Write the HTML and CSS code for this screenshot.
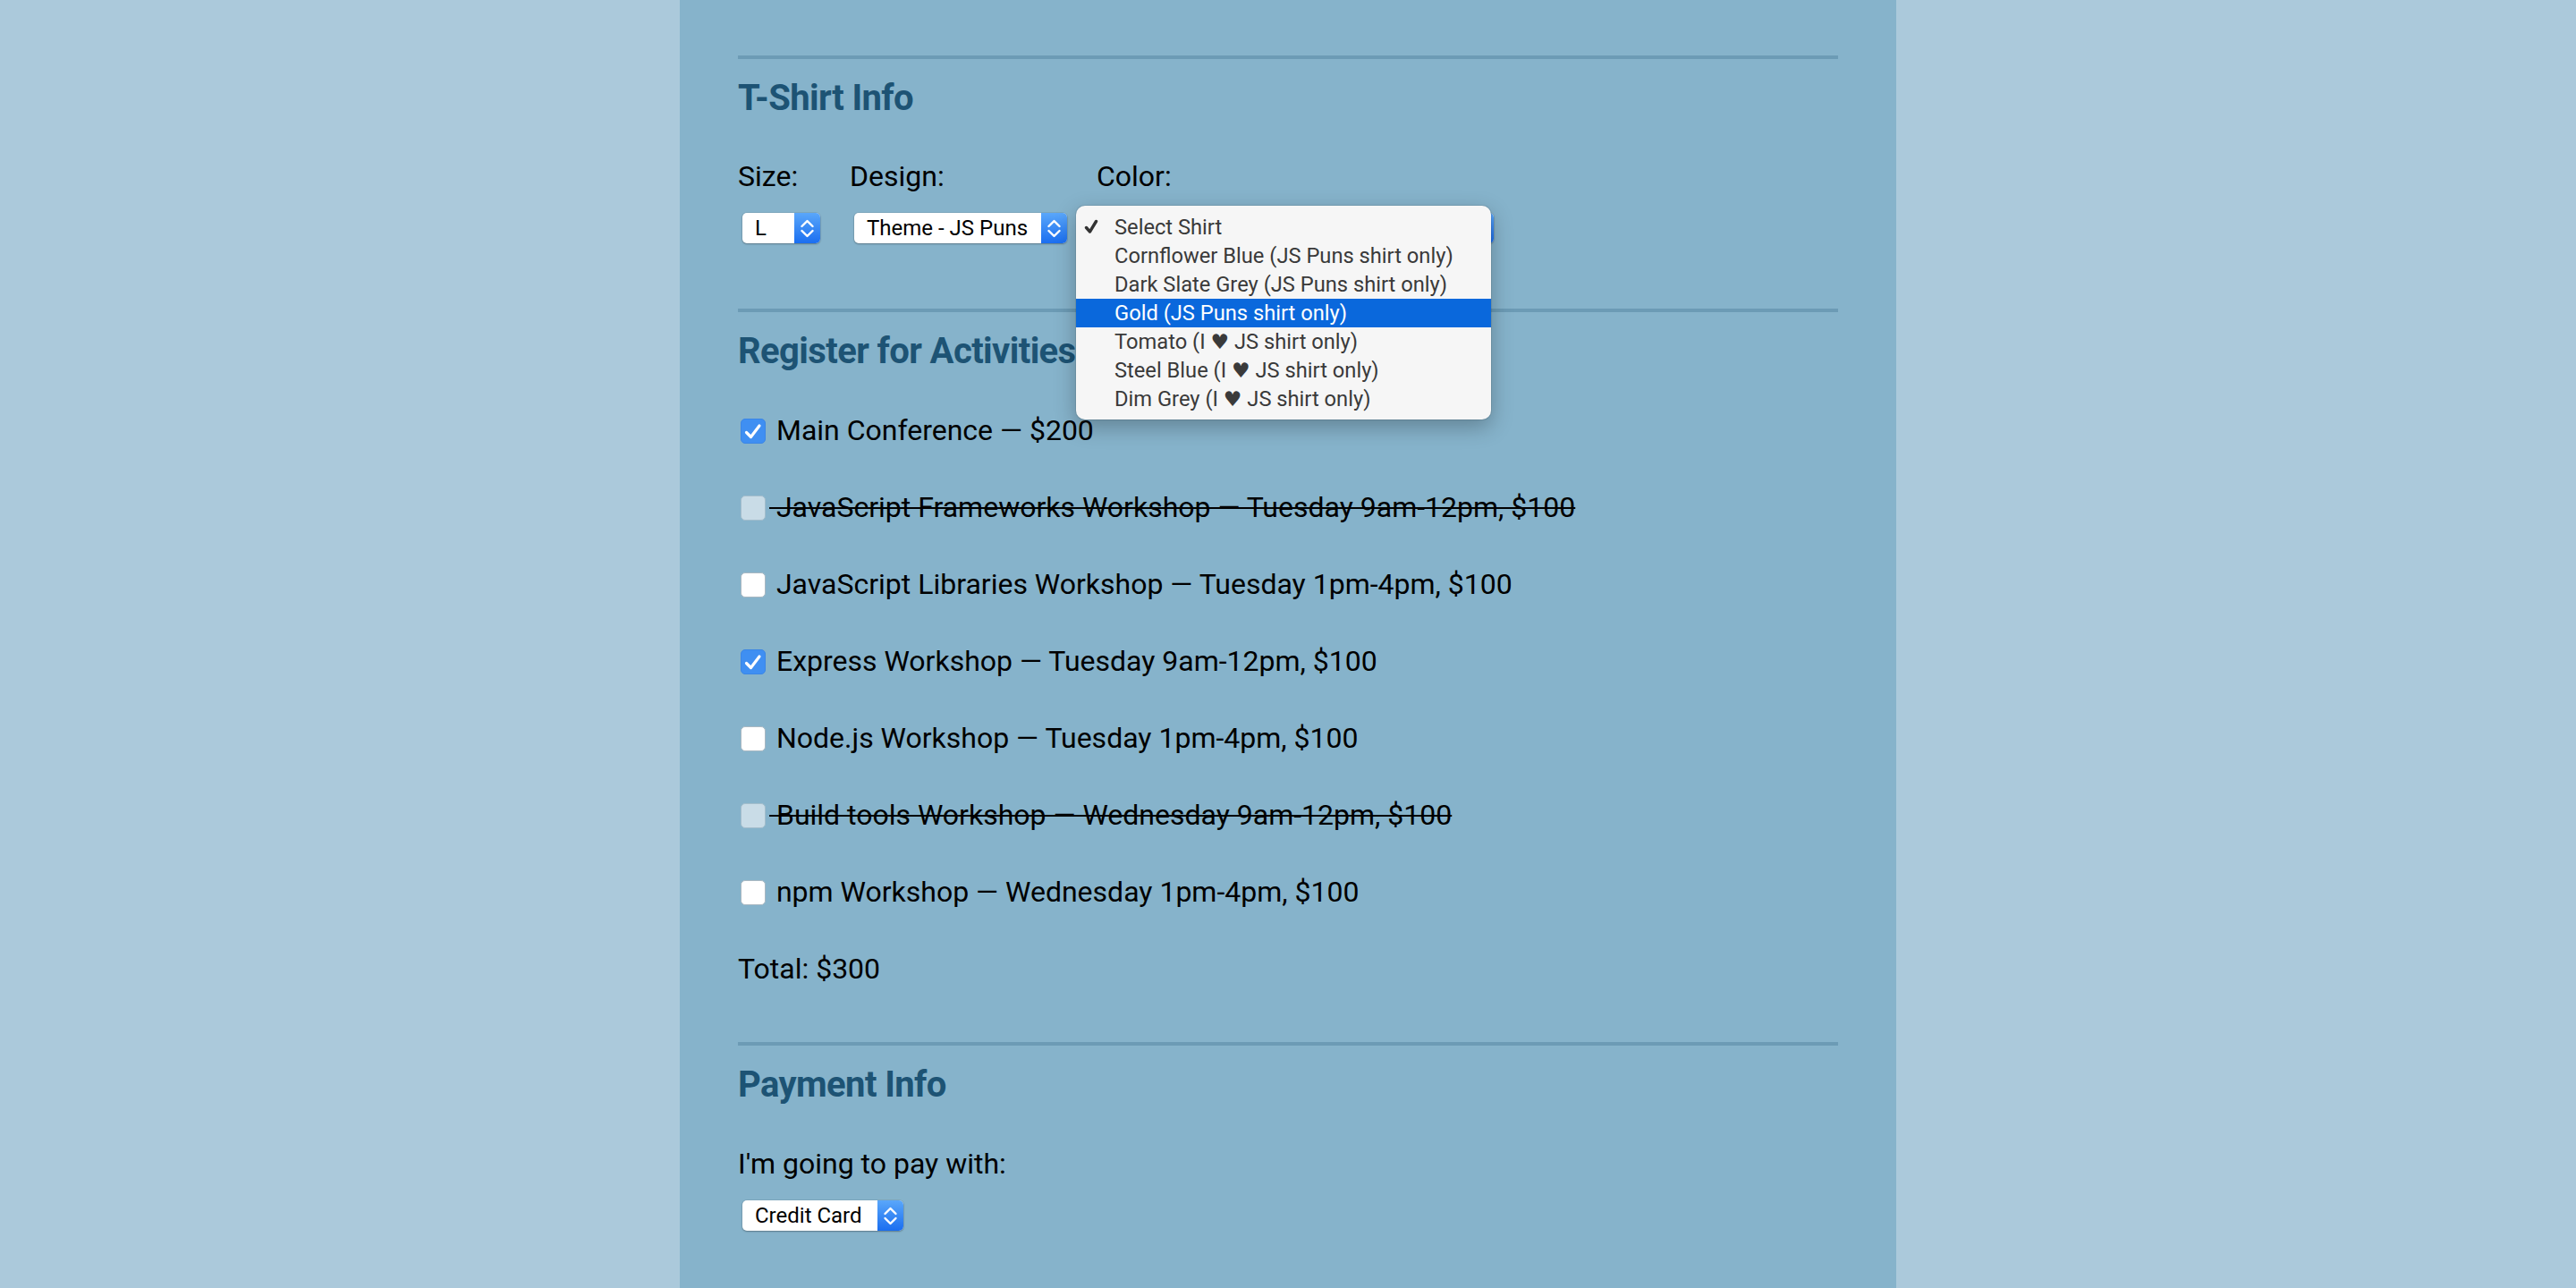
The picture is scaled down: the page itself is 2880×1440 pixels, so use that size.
FILE: index.html
```html
<!DOCTYPE html>
<html lang="en">
<head>
<meta charset="utf-8">
<title>Conference Registration</title>
<link rel="stylesheet" href="styles.css">
</head>
<body>
<div class="page">
  <section class="sec">
    <hr class="rule">
    <h2 class="sec-title">T-Shirt Info</h2>
    <div class="shirt-row">
      <div class="field">
        <div class="lbl">Size:</div>
        <div class="sel w-size">
          <span class="sel-text">L</span>
          <span class="sel-arrow"><svg width="29" height="34" viewBox="0 0 29 34"><path d="M8.5 15 L14.5 9 L20.5 15 M8.5 20 L14.5 26 L20.5 20" fill="none" stroke="#fff" stroke-width="2.4" stroke-linecap="round" stroke-linejoin="round"/></svg></span>
        </div>
      </div>
      <div class="field">
        <div class="lbl">Design:</div>
        <div class="sel w-design">
          <span class="sel-text">Theme - JS Puns</span>
          <span class="sel-arrow"><svg width="29" height="34" viewBox="0 0 29 34"><path d="M8.5 15 L14.5 9 L20.5 15 M8.5 20 L14.5 26 L20.5 20" fill="none" stroke="#fff" stroke-width="2.4" stroke-linecap="round" stroke-linejoin="round"/></svg></span>
        </div>
      </div>
      <div class="field">
        <div class="lbl">Color:</div>
        <div class="sel w-color">
          <span class="sel-text">Select Shirt</span>
          <span class="sel-arrow"><svg width="29" height="34" viewBox="0 0 29 34"><path d="M8.5 15 L14.5 9 L20.5 15 M8.5 20 L14.5 26 L20.5 20" fill="none" stroke="#fff" stroke-width="2.4" stroke-linecap="round" stroke-linejoin="round"/></svg></span>
          <ul class="menu">
            <li class="opt checked"><svg class="tick" width="30" height="32" viewBox="0 0 30 32"><path d="M11.5 16.5 L15.5 21 L22.5 9.5" fill="none" stroke="#333" stroke-width="3.4" stroke-linecap="round" stroke-linejoin="round"/></svg>Select Shirt</li>
            <li class="opt">Cornflower Blue (JS Puns shirt only)</li>
            <li class="opt">Dark Slate Grey (JS Puns shirt only)</li>
            <li class="opt hl">Gold (JS Puns shirt only)</li>
            <li class="opt">Tomato (I <span class="heart">♥</span> JS shirt only)</li>
            <li class="opt">Steel Blue (I <span class="heart">♥</span> JS shirt only)</li>
            <li class="opt">Dim Grey (I <span class="heart">♥</span> JS shirt only)</li>
          </ul>
        </div>
      </div>
    </div>
  </section>

  <section class="sec">
    <hr class="rule rule-2">
    <h2 class="sec-title">Register for Activities</h2>
    <div class="acts">
      <div class="act"><span class="cb on"><svg width="28" height="28" viewBox="0 0 28 28"><path d="M6.5 15.5 L11.5 20.5 L21 8" fill="none" stroke="#fff" stroke-width="3.2" stroke-linecap="round" stroke-linejoin="round"/></svg></span> Main Conference — $200</div>
      <div class="act off"><span class="cb dis"></span> JavaScript Frameworks Workshop — Tuesday 9am-12pm, $100</div>
      <div class="act"><span class="cb"></span> JavaScript Libraries Workshop — Tuesday 1pm-4pm, $100</div>
      <div class="act"><span class="cb on"><svg width="28" height="28" viewBox="0 0 28 28"><path d="M6.5 15.5 L11.5 20.5 L21 8" fill="none" stroke="#fff" stroke-width="3.2" stroke-linecap="round" stroke-linejoin="round"/></svg></span> Express Workshop — Tuesday 9am-12pm, $100</div>
      <div class="act"><span class="cb"></span> Node.js Workshop — Tuesday 1pm-4pm, $100</div>
      <div class="act off"><span class="cb dis"></span> Build tools Workshop — Wednesday 9am-12pm, $100</div>
      <div class="act"><span class="cb"></span> npm Workshop — Wednesday 1pm-4pm, $100</div>
      <div class="act total">Total: $300</div>
    </div>
  </section>

  <section class="sec">
    <hr class="rule rule-3">
    <h2 class="sec-title">Payment Info</h2>
    <div class="lbl pay-lbl">I'm going to pay with:</div>
    <div class="sel w-pay">
      <span class="sel-text">Credit Card</span>
      <span class="sel-arrow"><svg width="29" height="34" viewBox="0 0 29 34"><path d="M8.5 15 L14.5 9 L20.5 15 M8.5 20 L14.5 26 L20.5 20" fill="none" stroke="#fff" stroke-width="2.4" stroke-linecap="round" stroke-linejoin="round"/></svg></span>
    </div>
  </section>
</div>
</body>
</html>
```

FILE: styles.css
```css
html, body {
  margin: 0;
  padding: 0;
}
body {
  background: #abc9db;
  font-family: Roboto, "DejaVu Sans", sans-serif;
  color: #000;
}
.page {
  width: 1360px;
  min-height: 1440px;
  margin: 0 auto;
  background: #86b3cb;
  padding: 62px 65px 0;
  box-sizing: border-box;
}
.rule {
  height: 4px;
  border: 0;
  margin: 0 0 20px;
  background: #6c9bb5;
}
.rule-2 { margin-top: 73px; }
.rule-3 { margin-top: 62px; }
.sec-title {
  margin: 0;
  font-size: 40px;
  line-height: 48px;
  font-weight: 700;
  letter-spacing: -0.6px;
  color: #1d5374;
}
.shirt-row {
  display: flex;
  gap: 33px;
  margin-top: 43px;
}
.field {
  display: flex;
  flex-direction: column;
  align-items: flex-start;
}
.lbl {
  font-size: 32px;
  line-height: 40px;
  height: 40px;
}
.sel {
  position: relative;
  display: flex;
  align-items: center;
  height: 34px;
  margin: 21px 0 0 5px;
  background: #fff;
  border-radius: 5px;
  box-shadow: 0 1px 2px rgba(0, 0, 0, 0.28), 0 0 0 1px rgba(0, 0, 0, 0.06);
  box-sizing: border-box;
  font-size: 24px;
}
.sel-text {
  flex: 1;
  padding-left: 14px;
  line-height: 34px;
  white-space: nowrap;
}
.sel-arrow {
  width: 29px;
  height: 34px;
  border-radius: 0 5px 5px 0;
  background: linear-gradient(#5aa7fa, #1a6ef0);
  display: block;
}
.sel-arrow svg { display: block; }
.w-size { width: 87px; }
.w-design { width: 238px; }
.w-color { width: 439px; }
.w-pay { width: 180px; }

.menu {
  position: absolute;
  left: -28px;
  top: -8px;
  width: 464px;
  margin: 0;
  padding: 8px 0 7px;
  list-style: none;
  background: #f6f6f6;
  border-radius: 10px;
  box-shadow: 0 8px 24px rgba(0, 0, 0, 0.28), 0 0 0 1px rgba(0, 0, 0, 0.08);
  z-index: 5;
}
.opt {
  position: relative;
  height: 32px;
  line-height: 32px;
  padding-left: 43px;
  font-size: 23.7px;
  color: #3a3a3a;
  white-space: nowrap;
}
.opt.hl {
  background: #0a68dc;
  color: #fff;
}
.tick {
  position: absolute;
  left: 0;
  top: 0;
}
.heart {
  font-family: "DejaVu Sans", sans-serif;
  font-size: 23px;
  color: #3a3a3a;
}

.acts { margin-top: 44px; }
.act {
  height: 40px;
  line-height: 40px;
  font-size: 32px;
  margin-bottom: 46px;
  white-space: nowrap;
}
.act.off { text-decoration: line-through; text-decoration-thickness: 2px; }
.cb {
  display: inline-block;
  width: 28px;
  height: 28px;
  margin: 0 4px 0 3px;
  vertical-align: -4px;
  box-sizing: border-box;
  border-radius: 5px;
  background: #fff;
  border: 1px solid #a9b8c2;
}
.cb svg { display: block; margin: -1px; }
.cb.on {
  background: #3f8ff2;
  border-color: #3a86e6;
}
.cb.dis {
  background: #c9dce7;
  border-color: #a3bdcc;
}
.total { margin-bottom: 0; }
.pay-lbl { margin-top: 44px; }
```
